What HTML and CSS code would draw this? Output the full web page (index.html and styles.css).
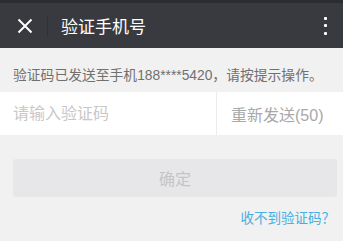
FILE: index.html
```html
<!DOCTYPE html>
<html lang="zh-CN">
<head>
  <meta charset="UTF-8">
  <meta name="viewport" content="width=device-width, initial-scale=1.0">
  <title>验证手机号</title>
  <link rel="stylesheet" href="styles.css">
</head>
<body>
  <div class="status-bar"></div>
  <div class="header">
    <div class="close">
      <svg width="16" height="16" viewBox="0 0 16 16">
        <path d="M1.5 1.5 L14.5 14.5 M14.5 1.5 L1.5 14.5" stroke="#fff" stroke-width="2" fill="none"/>
      </svg>
    </div>
    <div class="divider"></div>
    <div class="title">验证手机号</div>
    <div class="more">
      <span></span><span></span><span></span>
    </div>
  </div>

  <div class="tip">验证码已发送至手机188****5420，请按提示操作。</div>

  <div class="code-row">
    <input type="text" class="code-input" placeholder="请输入验证码">
    <div class="resend">重新发送(50)</div>
  </div>

  <div class="actions">
    <button class="btn-confirm" disabled>确定</button>
    <a class="help-link" href="#">收不到验证码？</a>
  </div>
</body>
</html>
```

FILE: styles.css
```css
body {
  margin: 0;
  background-color: #f1f1f1;
  font-family: 'Liberation Sans', 'Noto Sans CJK SC', sans-serif;
}

.status-bar {
  height: 3px;
  background-color: #2c2d31;
}

.header {
  height: 45px;
  background-color: #393a3f;
  display: flex;
  align-items: center;
}

.close {
  width: 47px;
  display: flex;
  justify-content: center;
  padding-left: 2px;
  box-sizing: border-box;
}

.close svg {
  display: block;
}

.divider {
  width: 1px;
  height: 22px;
  background-color: #2f3034;
}

.title {
  flex: 1;
  margin-left: 13px;
  color: #fff;
  font-size: 17px;
}

.more {
  width: 36px;
  display: flex;
  flex-direction: column;
  align-items: center;
  gap: 4.5px;
  padding-left: 2px;
}

.more span {
  width: 3px;
  height: 3px;
  background-color: #fff;
  border-radius: 1px;
}

.tip {
  height: 44px;
  line-height: 56px;
  box-sizing: border-box;
  padding-left: 13px;
  font-size: 13.8px;
  color: #707070;
  white-space: nowrap;
}

.code-row {
  display: flex;
  height: 43px;
  background-color: #fff;
}

.code-input {
  flex: 1;
  min-width: 0;
  border: none;
  outline: none;
  padding: 0 0 0 13px;
  font-family: inherit;
  font-size: 16px;
  background: transparent;
}

.code-input::placeholder {
  color: #c8c8c8;
}

.resend {
  width: 127px;
  border-left: 1px solid #ececec;
  display: flex;
  align-items: center;
  padding-left: 14px;
  box-sizing: border-box;
  font-size: 16px;
  color: #a8a8a8;
}

.actions {
  padding: 24px 6px 0 13px;
  display: flex;
  flex-direction: column;
  align-items: flex-end;
}

.btn-confirm {
  width: 324px;
  height: 38px;
  border: none;
  border-radius: 3px;
  background-color: #e7e7e9;
  color: #c4c4c6;
  font-family: inherit;
  font-size: 16px;
}

.help-link {
  margin-top: 10px;
  margin-right: 2px;
  font-size: 13.5px;
  color: #45b0e2;
  text-decoration: none;
}
```
